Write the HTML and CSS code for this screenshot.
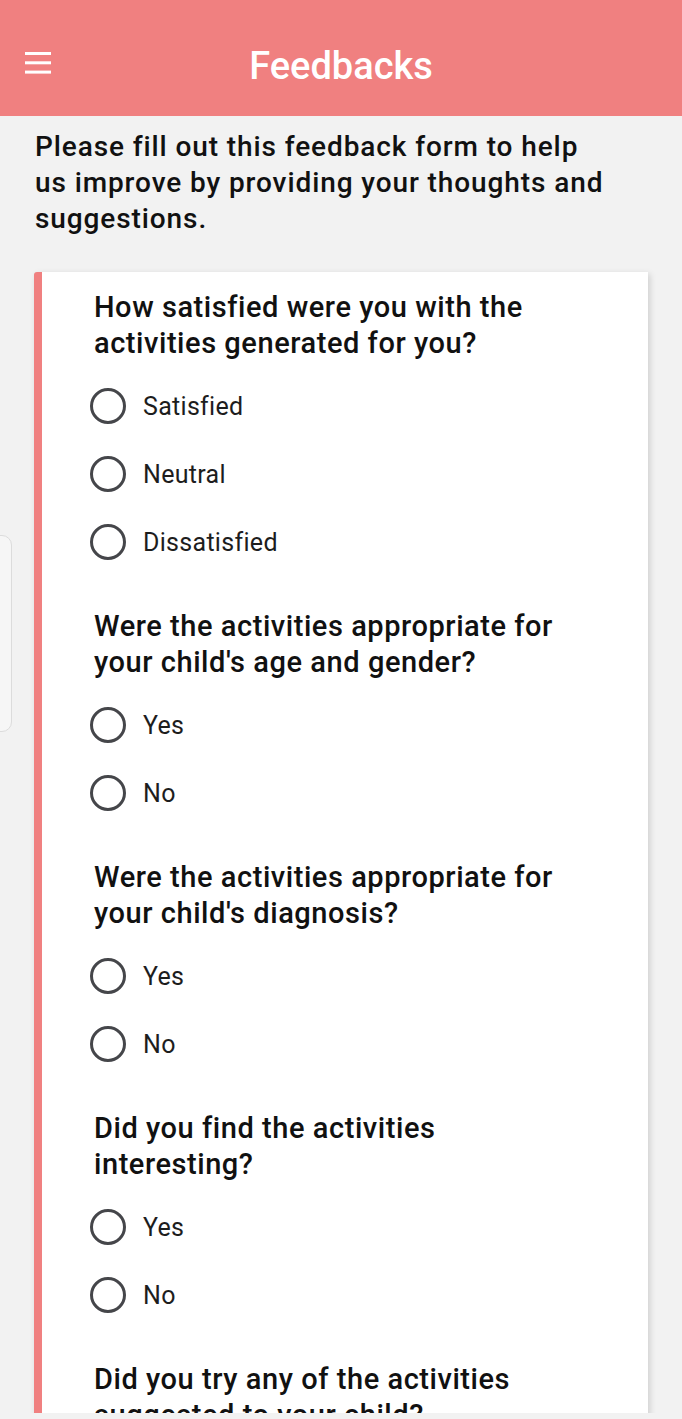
FILE: index.html
```html
<!DOCTYPE html>
<html>
<head>
<meta charset="utf-8">
<link rel="stylesheet" href="styles.css">
</head>
<body>
<header class="appbar">
  <svg class="menu" width="28" height="24" viewBox="0 0 28 24"><rect x="0" y="1" width="26" height="3" fill="#fff"/><rect x="0" y="10.3" width="26" height="3" fill="#fff"/><rect x="0" y="19.6" width="26" height="3" fill="#fff"/></svg>
  <h1 class="title">Feedbacks</h1>
</header>
<main class="content">
  <p class="intro">Please fill out this feedback form to help us improve by providing your thoughts and suggestions.</p>
  <section class="card">
    <div class="group">
      <p class="question">How satisfied were you with the activities generated for you?</p>
      <div class="option"><span class="radio"></span><span class="label">Satisfied</span></div>
      <div class="option"><span class="radio"></span><span class="label">Neutral</span></div>
      <div class="option"><span class="radio"></span><span class="label">Dissatisfied</span></div>
    </div>
    <div class="group">
      <p class="question">Were the activities appropriate for your child's age and gender?</p>
      <div class="option"><span class="radio"></span><span class="label">Yes</span></div>
      <div class="option"><span class="radio"></span><span class="label">No</span></div>
    </div>
    <div class="group">
      <p class="question">Were the activities appropriate for your child's diagnosis?</p>
      <div class="option"><span class="radio"></span><span class="label">Yes</span></div>
      <div class="option"><span class="radio"></span><span class="label">No</span></div>
    </div>
    <div class="group">
      <p class="question">Did you find the activities interesting?</p>
      <div class="option"><span class="radio"></span><span class="label">Yes</span></div>
      <div class="option"><span class="radio"></span><span class="label">No</span></div>
    </div>
    <div class="group">
      <p class="question">Did you try any of the activities suggested to your child?</p>
    </div>
  </section>
</main>
<div class="edge-handle"></div>
</body>
</html>
```
FILE: styles.css
```css
* { box-sizing: border-box; }
html, body { margin: 0; padding: 0; }
body {
  width: 682px;
  height: 1419px;
  background: #f2f2f2;
  font-family: Roboto, "Noto Sans", sans-serif;
  overflow: hidden;
  position: relative;
}
.appbar {
  height: 116px;
  padding-top: 16px;
  background: #f08080;
  display: flex;
  align-items: center;
  justify-content: center;
  position: relative;
}
.menu {
  position: absolute;
  left: 25px;
  top: 51px;
}
.title {
  margin: 0;
  color: #fff;
  font-size: 38px;
  font-weight: 500;
}
.content {
  height: 1297px;
  overflow: hidden;
  padding: 13px 0 0 0;
}
.intro {
  margin: 0 0 35px 35px;
  width: 578px;
  font-size: 28px;
  line-height: 36px;
  font-weight: 500;
  letter-spacing: 0.9px;
  color: #111;
}
.card {
  margin-left: 34px;
  width: 614px;
  background: #fff;
  border-left: 8px solid #f08080;
  border-radius: 3px 0 0 0;
  box-shadow: 2px 2px 6px rgba(0,0,0,0.15);
  padding: 17px 68px 40px 52px;
}
.group { margin-bottom: 32px; }
.question {
  margin: 0 0 11px 0;
  font-size: 29px;
  line-height: 36px;
  font-weight: 500;
  letter-spacing: 0.55px;
  color: #111;
}
.option {
  height: 68px;
  display: flex;
  align-items: center;
  margin-left: -4px;
}
.radio {
  width: 36px;
  height: 36px;
  border: 3px solid #45464a;
  border-radius: 50%;
  flex: none;
}
.label {
  margin-left: 17px;
  font-size: 25px;
  letter-spacing: 0.3px;
  color: #1d1d1d;
}
.edge-handle {
  position: absolute;
  left: -10px;
  top: 535px;
  width: 22px;
  height: 197px;
  background: #f6f6f6;
  border: 1px solid #dcdcdc;
  border-radius: 10px;
}
```
